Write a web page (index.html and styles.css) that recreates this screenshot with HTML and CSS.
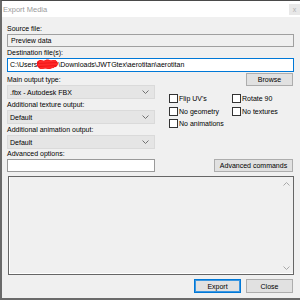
FILE: index.html
```html
<!DOCTYPE html>
<html>
<head>
<meta charset="utf-8">
<link rel="stylesheet" href="styles.css">
</head>
<body>
<div class="win">
  <div class="titlebar">
    <span class="title">Export Media</span>
    <span class="close">x</span>
  </div>
  <div class="client">
    <div class="lbl first">Source file:</div>
    <div class="field disabled">Preview data</div>
    <div class="lbl">Destination file(s):</div>
    <div class="field active">C:\Users<svg class="scribble" width="21" height="11" viewBox="0 0 21 11"><path d="M0 3 C2 0 5 1 7 2 C9 0 12 0 14 2 C16 0 20 1 21 4 C21 7 19 9 16 8 C14 11 10 10 8 9 C5 11 2 10 1 8 C-1 6 0 5 0 3 Z" fill="#f01818"/><path d="M2 3 L19 2 M1 6 L20 5 M3 9 L17 8" stroke="#ff2a2a" stroke-width="2.2" fill="none"/></svg>\Downloads\JWTGtex\aerotitan\aerotitan</div>
    <div class="row-browse">
      <span class="lbl">Main output type:</span>
      <button class="btn">Browse</button>
    </div>
    <div class="opts">
      <div class="left">
        <div class="select"><span>.fbx - Autodesk FBX</span><svg class="chev" width="7" height="4" viewBox="0 0 7 4"><path d="M0.5 0.5 L3.5 3.5 L6.5 0.5" stroke="#707070" fill="none"/></svg></div>
        <div class="lbl">Additional texture output:</div>
        <div class="select"><span>Default</span><svg class="chev" width="7" height="4" viewBox="0 0 7 4"><path d="M0.5 0.5 L3.5 3.5 L6.5 0.5" stroke="#707070" fill="none"/></svg></div>
        <div class="lbl">Additional animation output:</div>
        <div class="select"><span>Default</span><svg class="chev" width="7" height="4" viewBox="0 0 7 4"><path d="M0.5 0.5 L3.5 3.5 L6.5 0.5" stroke="#707070" fill="none"/></svg></div>
      </div>
      <div class="checks">
        <div class="cb"><span class="box"></span>Flip UV's</div>
        <div class="cb"><span class="box"></span>Rotate 90</div>
        <div class="cb"><span class="box"></span>No geometry</div>
        <div class="cb"><span class="box"></span>No textures</div>
        <div class="cb"><span class="box"></span>No animations</div>
      </div>
    </div>
    <div class="lbl adv">Advanced options:</div>
    <div class="adv-row">
      <div class="input"></div>
      <button class="btn wide">Advanced commands</button>
    </div>
    <div class="log">
      <div class="scroll">
        <svg width="7" height="4" viewBox="0 0 7 4"><path d="M0.5 3.5 L3.5 0.5 L6.5 3.5" stroke="#a8a8a8" fill="none"/></svg>
        <svg width="7" height="4" viewBox="0 0 7 4"><path d="M0.5 0.5 L3.5 3.5 L6.5 0.5" stroke="#a8a8a8" fill="none"/></svg>
      </div>
    </div>
    <div class="footer">
      <button class="btn primary">Export</button>
      <button class="btn">Close</button>
    </div>
  </div>
</div>
</body>
</html>
```
FILE: styles.css
```css
html, body {
  margin: 0;
  padding: 0;
  background: #f0f0f0;
}
body {
  width: 300px;
  height: 300px;
  overflow: hidden;
  font-family: "Liberation Sans", Arial, sans-serif;
  font-size: 7px;
  color: #000;
}
.win {
  box-sizing: border-box;
  height: 300px;
  display: flex;
  flex-direction: column;
  border-top: 1px solid #4a4a4a;
  border-left: 2px solid #6a6a6a;
  border-bottom: 2px solid #6a6a6a;
}
.titlebar {
  height: 16px;
  background: #fff;
  display: flex;
  align-items: center;
  justify-content: space-between;
  padding: 0 0 0 1px;
}
.title {
  font-size: 7.5px;
  color: #9a9a9a;
}
.close {
  width: 11px;
  height: 11px;
  margin-top: 3px;
  align-self: flex-start;
  background: #e8e8e8;
  color: #b0b0b0;
  font-size: 7px;
  display: flex;
  align-items: center;
  justify-content: center;
}
.client {
  flex: 1;
  padding: 0 6px 0 5px;
  display: flex;
  flex-direction: column;
}
.lbl {
  height: 10px;
  line-height: 10px;
  margin-top: 1px;
  white-space: nowrap;
}
.lbl.first {
  margin-top: 7px;
}
.field {
  box-sizing: border-box;
  height: 13px;
  line-height: 11px;
  border: 1px solid #a6a6a6;
  padding-left: 3px;
  white-space: nowrap;
  overflow: hidden;
}
.field.disabled {
  background: #f0f0f0;
  border-color: #a0a0a0;
}
.field.active {
  height: 14px;
  line-height: 12px;
  background: #fff;
  border-color: #0078d7;
  padding-left: 2px;
}
.scribble {
  vertical-align: middle;
  margin-top: -2px;
}
.row-browse {
  margin-top: 1px;
  height: 12px;
  display: flex;
  justify-content: space-between;
  align-items: flex-end;
  padding-right: 1px;
}
.row-browse .lbl {
  margin-top: 0;
}
.btn {
  box-sizing: border-box;
  width: 47px;
  height: 13px;
  margin: 0;
  padding: 0;
  font-family: inherit;
  font-size: 7px;
  color: #000;
  background: #e1e1e1;
  border: 1px solid #adadad;
  align-self: flex-start;
}
.btn.primary {
  border: 1px solid #0078d7;
  box-shadow: inset 0 0 0 1px #3c97e0;
}
.btn.wide {
  width: 79px;
  height: 13px;
}
.opts {
  display: grid;
  grid-template-columns: 148px 1fr;
  column-gap: 14px;
}
.left {
  display: flex;
  flex-direction: column;
}
.select {
  box-sizing: border-box;
  height: 14px;
  background: #e5e5e5;
  border: 1px solid #dadada;
  padding: 0 5px 0 2px;
  display: flex;
  align-items: center;
  justify-content: space-between;
}
.checks {
  margin-top: 9px;
  display: grid;
  grid-template-columns: 63px 1fr;
  grid-auto-rows: 12.5px;
  align-content: start;
}
.cb {
  display: flex;
  align-items: flex-start;
  line-height: 9px;
  white-space: nowrap;
}
.box {
  box-sizing: border-box;
  width: 9px;
  height: 9px;
  border: 1px solid #333;
  background: #fff;
  margin-right: 1px;
  flex: none;
}
.lbl.adv {
  margin-top: 0;
}
.adv-row {
  display: flex;
  justify-content: space-between;
  padding-right: 1px;
}
.input {
  box-sizing: border-box;
  width: 148px;
  height: 13px;
  background: #fff;
  border: 1px solid #9a9a9a;
}
.log {
  box-sizing: border-box;
  margin: 4px 0 0 1px;
  height: 99px;
  border: 1px solid #666;
  box-shadow: inset 1px -1px 0 #fff;
  display: flex;
  justify-content: flex-end;
}
.scroll {
  width: 14px;
  display: flex;
  flex-direction: column;
  justify-content: space-between;
  align-items: center;
  padding: 5px 0 4px;
}
.scroll svg {
  display: block;
}
.footer {
  margin-top: 4px;
  display: flex;
  justify-content: flex-end;
  gap: 5px;
  padding-right: 1px;
}
.footer .btn {
  height: 14px;
}
```
